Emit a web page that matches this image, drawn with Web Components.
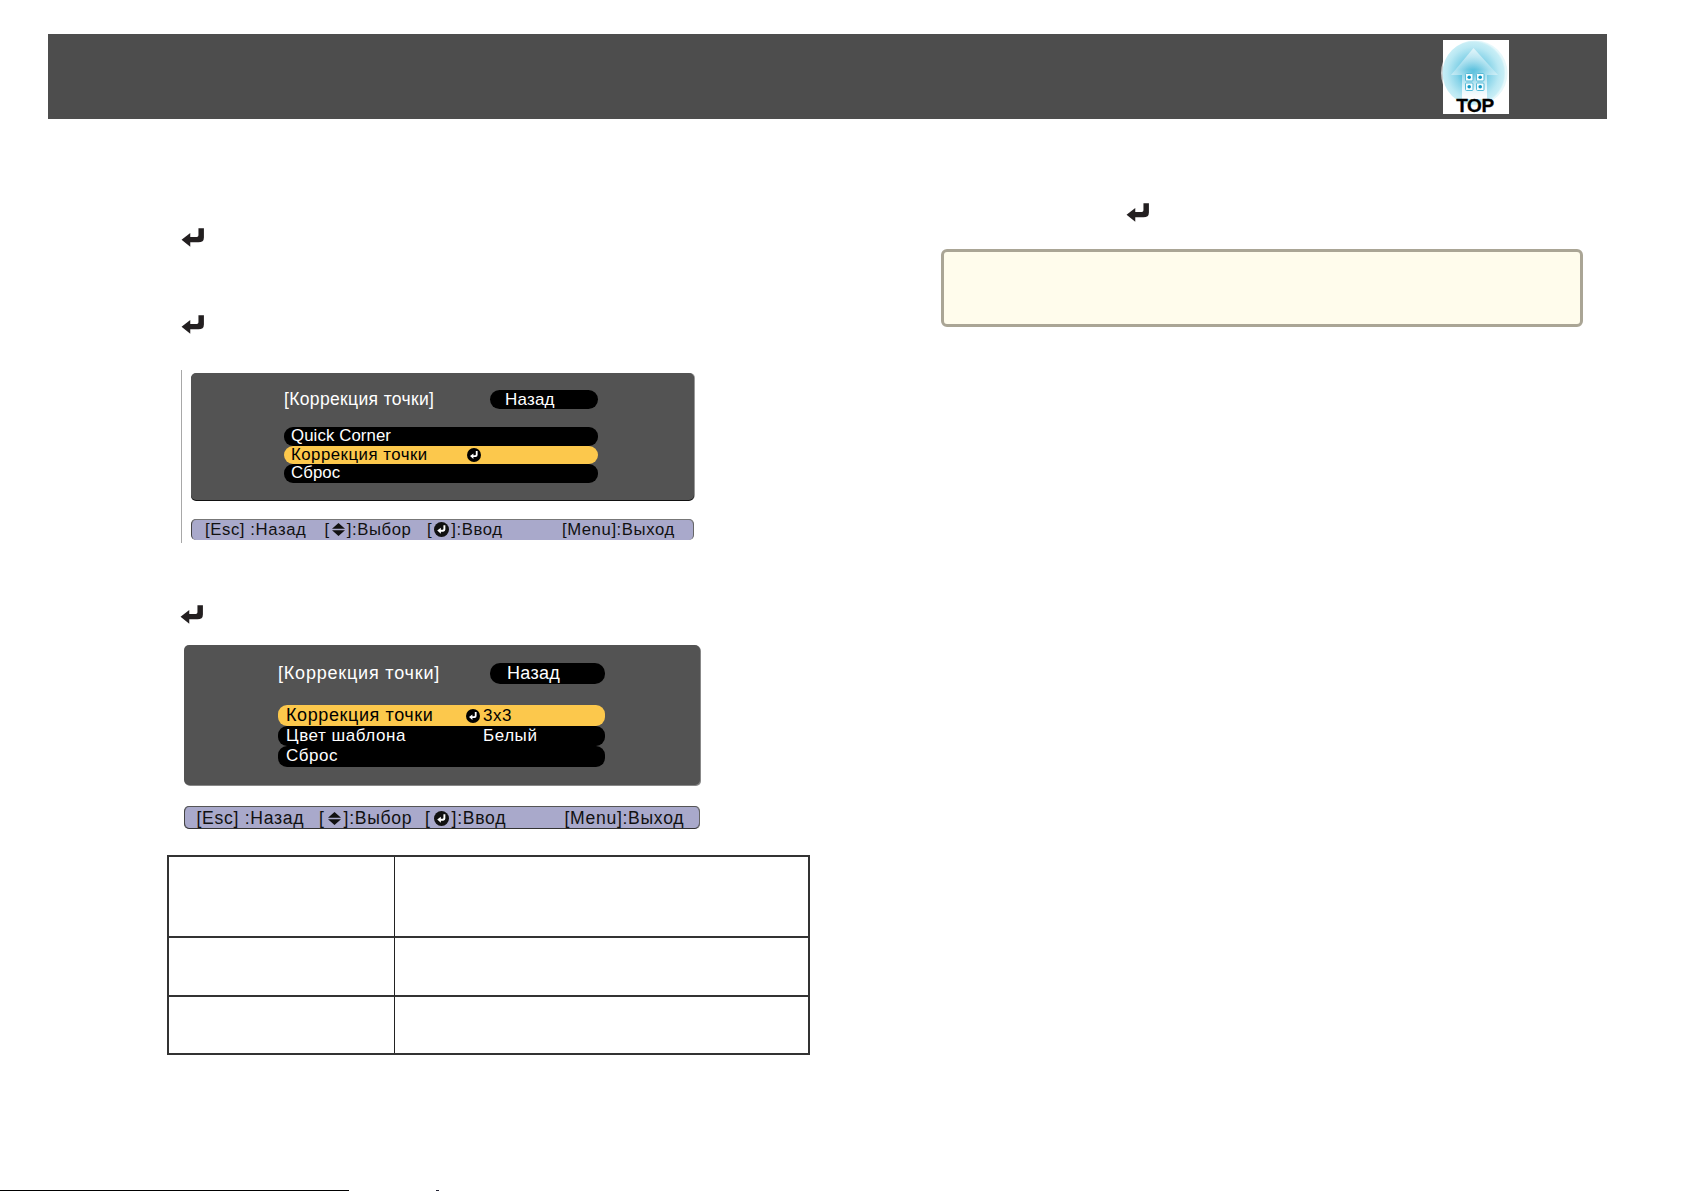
<!DOCTYPE html>
<html lang="ru">
<head>
<meta charset="utf-8">
<title>Коррекция точки</title>
<style>
html,body{margin:0;padding:0;background:#fff;}
body{font-family:"Liberation Sans",Arial,sans-serif;}
</style>
</head>
<body>
<doc-page>
  <doc-header slot="header"></doc-header>
  <div slot="left">
    <enter-key style="margin:109px 0 0 14px"></enter-key>
    <enter-key style="margin:67px 0 0 14px"></enter-key>
    <osd-figure style="margin-top:35px">
      <osd-panel size="small">
        <span slot="title">[Коррекция точки]</span>
        <span slot="back">Назад</span>
        <osd-row>Quick Corner</osd-row>
        <osd-row active><span>Коррекция точки</span><osd-enter slot="icon"></osd-enter></osd-row>
        <osd-row>Сброс</osd-row>
      </osd-panel>
      <osd-status size="small"></osd-status>
    </osd-figure>
    <enter-key style="margin:62px 0 0 13px"></enter-key>
    <osd-panel size="large" style="margin:20px 0 0 17px">
      <span slot="title">[Коррекция точки]</span>
      <span slot="back">Назад</span>
      <osd-row active><span>Коррекция точки</span><osd-enter slot="icon"></osd-enter><span slot="value">3x3</span></osd-row>
      <osd-row><span>Цвет шаблона</span><span slot="value">Белый</span></osd-row>
      <osd-row>Сброс</osd-row>
    </osd-panel>
    <osd-status size="large" style="margin:21px 0 0 17px"></osd-status>
    <blank-table style="margin-top:26px"></blank-table>
  </div>
  <div slot="right">
    <enter-key style="margin:84px 0 0 185px"></enter-key>
    <note-box style="margin-top:26px"></note-box>
  </div>
  <foot-line slot="footer"></foot-line>
</doc-page>

<script>
function def(name, css, html){
  customElements.define(name, class extends HTMLElement{
    constructor(){
      super();
      const root=this.attachShadow({mode:'open'});
      root.innerHTML='<style>'+css+'</style>'+html;
    }
  });
}

def('doc-page',`
  :host{display:flex;flex-direction:column;width:1685px;height:1191px;overflow:hidden}
  .cols{display:grid;grid-template-columns:642px 642px;column-gap:132px;padding-left:167px}
  .foot{margin-top:auto}
`,`
  <slot name="header"></slot>
  <div class="cols"><div><slot name="left"></slot></div><div><slot name="right"></slot></div></div>
  <div class="foot"><slot name="footer"></slot></div>
`);

def('doc-header',`
  :host{display:flex;justify-content:flex-end;align-items:flex-start;box-sizing:border-box;
    margin:34px 0 0 48px;width:1559px;height:85px;background:#4d4d4d;padding:6px 98px 0 0}
  svg{display:block;overflow:visible}
`,`
  <svg width="66" height="74" viewBox="0 0 66 74" aria-label="TOP">
    <defs>
      <radialGradient id="glow" cx="47%" cy="50%" r="50%">
        <stop offset="0" stop-color="#08a0cc"/>
        <stop offset=".22" stop-color="#3db6d8"/>
        <stop offset=".5" stop-color="#86d3e8"/>
        <stop offset=".8" stop-color="#b9e8f3"/>
        <stop offset=".95" stop-color="#c8eef6"/>
        <stop offset="1" stop-color="#e6f8fb"/>
      </radialGradient>
      <linearGradient id="house" x1="0" y1="0" x2="0" y2="1">
        <stop offset="0" stop-color="#ffffff" stop-opacity=".62"/>
        <stop offset=".42" stop-color="#ffffff" stop-opacity=".28"/>
        <stop offset=".7" stop-color="#ffffff" stop-opacity=".6"/>
        <stop offset="1" stop-color="#ffffff" stop-opacity="1"/>
      </linearGradient>
      <clipPath id="sliver"><rect x="-4" y="14" width="4" height="38"/></clipPath>
    </defs>
    <circle cx="32" cy="33" r="34" fill="#c9c9c9" clip-path="url(#sliver)"/>
    <rect width="66" height="74" fill="#fff"/>
    <circle cx="32" cy="33" r="32.5" fill="url(#glow)"/>
    <path d="M30.5 8 L55 35 H44 V59 H19 V35 H8 Z" fill="url(#house)"/>
    <g fill="#f4fcfe" stroke="#57bcd8" stroke-width="1">
      <rect x="22.5" y="33.5" width="7.5" height="7.5" rx="1"/>
      <rect x="33.5" y="33.5" width="7.5" height="7.5" rx="1"/>
      <rect x="22.5" y="43" width="7.5" height="7.5" rx="1"/>
      <rect x="33.5" y="43" width="7.5" height="7.5" rx="1"/>
    </g>
    <g fill="#0f98c4">
      <circle cx="26.2" cy="37.2" r="1.8"/><circle cx="37.2" cy="37.2" r="1.8"/>
      <circle cx="26.2" cy="46.7" r="1.8"/><circle cx="37.2" cy="46.7" r="1.8"/>
    </g>
    <text x="32" y="72" text-anchor="middle" font-family="Liberation Sans, Arial, sans-serif" font-weight="700" font-size="19" letter-spacing="-.4" stroke="#000" stroke-width=".3" fill="#000">TOP</text>
  </svg>
`);

def('enter-key',`
  :host{display:block;width:24px;height:20px}
  svg{display:block}
`,`
  <svg width="24" height="20" viewBox="0 0 22 18"><path fill="#231f20" d="M21 0V8.5Q21 13 16 13H8.5V17L.5 10.5 8.5 4.5V8H14.5Q16 8 16 6.5V0Z"/></svg>
`);

def('osd-figure',`
  :host{display:block;box-sizing:border-box;margin-left:14px;width:530px;height:173px;
    border-left:1px solid #a8a8a8;padding:3px 0 0 9px}
  ::slotted(osd-status){margin-top:19px}
`,`<slot></slot>`);

def('osd-panel',`
  :host{display:block;box-sizing:border-box;color:#fff;background:#535353;border-radius:5px;
    font-family:"Liberation Sans",Arial,sans-serif}
  :host([size=small]){width:503px;height:127px;padding:17px 96px 0 93px;font-size:16.8px;letter-spacing:.1px;box-shadow:0 1px 0 #111,1px 0 0 #999;
    --row-h:18.6px;--head-gap:18px;--head-h:19px;--text-pad:7px;--back-pad:15px;--title-w:206px;--c1:176px;--c2:14px;
    --title-fs:17.5px;--title-ls:.35px;--back-fs:17px;--back-ls:.2px;--act-fs:16.8px;--act-ls:.5px}
  :host([size=large]){width:516px;height:140px;padding:18px 95px 0 94px;font-size:17px;letter-spacing:.55px;box-shadow:1px 1px 0 #888;
    --row-h:20.5px;--head-gap:21px;--head-h:21px;--text-pad:8px;--back-pad:17px;--title-w:212px;--c1:180px;--c2:17px;
    --title-fs:18px;--title-ls:.8px;--back-fs:18px;--back-ls:.3px;--act-fs:18px;--act-ls:.6px}
  .head{display:flex;height:var(--head-h);margin-bottom:var(--head-gap)}
  .title{width:var(--title-w);line-height:var(--head-h);white-space:nowrap;font-size:var(--title-fs);letter-spacing:var(--title-ls)}
  .back{flex:1;background:#000;border-radius:10px;padding-left:var(--back-pad);line-height:var(--head-h);font-size:var(--back-fs);letter-spacing:var(--back-ls)}
  .rows{display:flex;flex-direction:column}
`,`
  <div class="head"><div class="title"><slot name="title"></slot></div><div class="back"><slot name="back"></slot></div></div>
  <div class="rows"><slot></slot></div>
`);

def('osd-row',`
  :host{display:grid;grid-template-columns:var(--c1) var(--c2) 1fr;align-items:center;height:var(--row-h);
    line-height:var(--row-h);background:#000;color:#fff;border-radius:9px;padding-left:var(--text-pad);box-sizing:border-box;white-space:nowrap}
  :host([active]){background:#fcc84c;color:#000}
  :host([active]) ::slotted(span:not([slot])){font-size:var(--act-fs);letter-spacing:var(--act-ls)}
`,`<div><slot></slot></div><div style="display:flex;align-items:center"><slot name="icon"></slot></div><div><slot name="value"></slot></div>`);

def('osd-enter',`
  :host{display:block;width:14px;height:14px}
  svg{display:block}
`,`<svg width="14" height="14" viewBox="0 0 14 14"><circle cx="7" cy="7" r="7" fill="#000"/><path fill="#fff" d="M10.6 3V7Q10.6 9 8.6 9H6.4V11L3 8 6.4 5.4V7.2H8Q8.8 7.2 8.8 6.4V3Z"/></svg>`);

const diamond='<svg class="i" width="13" height="13" viewBox="0 0 13 13"><path fill="#111" d="M6.5 0 13 5.8H0ZM0 7.2H13L6.5 13Z"/></svg>';
const ent='<svg class="i" width="15" height="15" viewBox="0 0 14 14"><circle cx="7" cy="7" r="7" fill="#111"/><path fill="#fff" d="M10.6 3V7Q10.6 9 8.6 9H6.4V11L3 8 6.4 5.4V7.2H8Q8.8 7.2 8.8 6.4V3Z"/></svg>';
def('osd-status',`
  :host{display:grid;box-sizing:border-box;align-items:center;background:#a9a9cb;color:#111;white-space:nowrap;
    border-radius:5px;border-left:1px solid #444;border-right:1px solid #666;box-shadow:0 1px 0 #777 inset;
    font-family:"Liberation Sans",Arial,sans-serif;--gap:2px}
  :host([size=small]){width:503px;height:21px;padding:0 0 0 13px;font-size:16.7px;letter-spacing:.6px;grid-template-columns:119.5px 102.5px 135px auto}
  :host([size=large]){width:516px;height:23px;padding:1px 0 0 11.5px;font-size:17.6px;letter-spacing:.7px;grid-template-columns:122.5px 106px 139.5px auto;box-shadow:0 1px 0 #555 inset,0 -1px 0 #333 inset;--gap:3px}
  span{display:inline-flex;align-items:center}
  .i{margin:0 var(--gap);display:block}
`,`<span>[Esc] :Назад</span><span>[${diamond}]:Выбор</span><span>[${ent}]:Ввод</span><span>[Menu]:Выход</span>`);

def('blank-table',`
  :host{display:grid;box-sizing:border-box;width:643px;height:200px;border:2px solid #333;
    grid-template-columns:226px 1fr;grid-template-rows:81px 59px 1fr}
  div{border-right:1px solid #222;border-bottom:2px solid #333}
  div:nth-of-type(2n){border-right:0}
  div:nth-last-of-type(-n+2){border-bottom:0}
`,`<div></div><div></div><div></div><div></div><div></div><div></div>`);

def('note-box',`
  :host{display:block;box-sizing:border-box;width:642px;height:78px;background:#fffcec;
    border:3px solid #aaa595;border-radius:6px}
`,``);

def('foot-line',`
  :host{display:flex;height:1px}
  .a{width:349px;background:#000}
  .b{width:3px;margin-left:87px;background:#223}
`,`<div class="a"></div><div class="b"></div>`);
</script>
</body>
</html>
